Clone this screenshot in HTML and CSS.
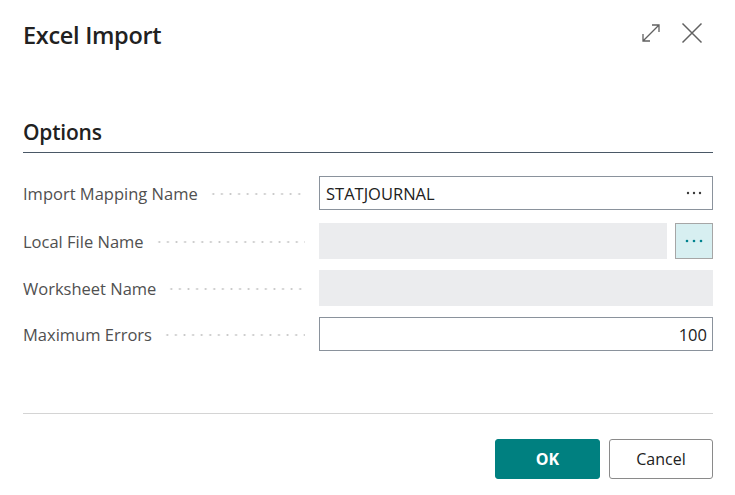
FILE: index.html
```html
<!DOCTYPE html>
<html>
<head>
<meta charset="utf-8">
<link rel="stylesheet" href="styles.css">
</head>
<body>
<div class="dialog">
  <div class="header">
    <h1 class="title">Excel Import</h1>
    <div class="header-icons">
      <svg class="icon" width="20" height="20" viewBox="0 0 20 20">
        <path d="M2 18 L18 2 M11 2 H18 V9 M2 11 V18 H9" fill="none" stroke="#616161" stroke-width="1.3"/>
      </svg>
      <svg class="icon" width="22" height="22" viewBox="0 0 22 22">
        <path d="M1.5 1.5 L20.5 20.5 M20.5 1.5 L1.5 20.5" fill="none" stroke="#616161" stroke-width="1.5"/>
      </svg>
    </div>
  </div>

  <div class="section">
    <h2 class="section-title">Options</h2>
  </div>

  <div class="form">
    <div class="row">
      <div class="label"><span class="label-text">Import Mapping Name</span><span class="leader"></span></div>
      <div class="field field-edit">
        <span class="value">STATJOURNAL</span>
        <svg class="dots" width="16" height="4" viewBox="0 0 16 4"><circle cx="2" cy="2" r="1.2" fill="#3a3a3a"/><circle cx="8" cy="2" r="1.2" fill="#3a3a3a"/><circle cx="14" cy="2" r="1.2" fill="#3a3a3a"/></svg>
      </div>
    </div>
    <div class="row">
      <div class="label"><span class="label-text">Local File Name</span><span class="leader"></span></div>
      <div class="field-group">
        <div class="field field-ro"></div>
        <div class="assist-btn">
          <svg width="18" height="4" viewBox="0 0 18 4"><circle cx="2" cy="2" r="1.3" fill="#00838f"/><circle cx="9" cy="2" r="1.3" fill="#00838f"/><circle cx="16" cy="2" r="1.3" fill="#00838f"/></svg>
        </div>
      </div>
    </div>
    <div class="row">
      <div class="label"><span class="label-text">Worksheet Name</span><span class="leader"></span></div>
      <div class="field field-ro"></div>
    </div>
    <div class="row">
      <div class="label"><span class="label-text">Maximum Errors</span><span class="leader"></span></div>
      <div class="field field-edit field-num">
        <span class="value">100</span>
      </div>
    </div>
  </div>

  <div class="footer">
    <button class="btn btn-primary">OK</button>
    <button class="btn btn-secondary">Cancel</button>
  </div>
</div>
</body>
</html>
```

FILE: styles.css
```css
html, body {
  margin: 0;
  padding: 0;
  background: #ffffff;
}

body {
  font-family: "Open Sans", "Noto Sans", sans-serif;
  color: #212121;
  width: 735px;
  height: 495px;
  overflow: hidden;
}

.dialog {
  padding: 0 22px 0 23px;
}

.header {
  display: flex;
  justify-content: space-between;
  align-items: flex-start;
  height: 110px;
}

.title {
  margin: 0;
  padding-top: 18px;
  font-size: 23.5px;
  font-weight: 600;
  line-height: 34px;
  letter-spacing: -0.3px;
  color: #212121;
}

.header-icons {
  display: flex;
  align-items: center;
  gap: 20px;
  padding-top: 22px;
  padding-right: 10px;
}

.icon {
  display: block;
}

.section-title {
  margin: 0;
  font-size: 21px;
  font-weight: 600;
  line-height: 30px;
  letter-spacing: -0.2px;
  padding-top: 7px;
  padding-bottom: 5px;
  border-bottom: 1px solid #4a5866;
  color: #212121;
}

.form {
  display: flex;
  flex-direction: column;
  gap: 13px;
  padding-top: 23px;
}

.row {
  display: grid;
  grid-template-columns: 282px 1fr;
  column-gap: 14px;
  height: 34px;
  align-items: center;
}

.label {
  display: flex;
  align-items: center;
  font-size: 16.5px;
  color: #505050;
}

.label-text {
  white-space: nowrap;
}

.leader {
  flex: 1;
  height: 4px;
  margin-left: 11px;
  margin-top: 2px;
  background-image: radial-gradient(circle, #c8c8c8 0.9px, transparent 1.2px);
  background-size: 8.6px 4px;
  background-repeat: repeat-x;
  background-position: left center;
}

.field {
  box-sizing: border-box;
  height: 34px;
  display: flex;
  align-items: center;
  padding: 0 6px;
  font-size: 16.5px;
}

.field-edit {
  border: 1px solid #8a929c;
  background: #ffffff;
  justify-content: space-between;
}

.dots {
  display: block;
  margin-right: 4px;
}

.field-num {
  justify-content: flex-end;
  padding-right: 5px;
}

.field-ro {
  background: #ebecee;
  height: 36px;
}

.field-group {
  display: flex;
  gap: 8px;
  height: 36px;
}

.field-group .field-ro {
  flex: 1;
}

.assist-btn {
  box-sizing: border-box;
  width: 38px;
  height: 36px;
  background: #d7eff1;
  border: 1px solid #a6a6a6;
  display: flex;
  align-items: center;
  justify-content: center;
}

.footer {
  margin-top: 62px;
  border-top: 1px solid #d4d4d4;
  padding-top: 25px;
  display: flex;
  justify-content: flex-end;
  gap: 9px;
}

.btn {
  box-sizing: border-box;
  height: 40px;
  font-family: "Open Sans", "Noto Sans", sans-serif;
  font-size: 16px;
  border-radius: 3px;
  cursor: pointer;
}

.btn-primary {
  width: 105px;
  background: #008080;
  border: 1px solid #008080;
  color: #ffffff;
  font-weight: 700;
}

.btn-secondary {
  width: 104px;
  background: #ffffff;
  border: 1px solid #8a8a8a;
  color: #212121;
  font-weight: 400;
}
```
